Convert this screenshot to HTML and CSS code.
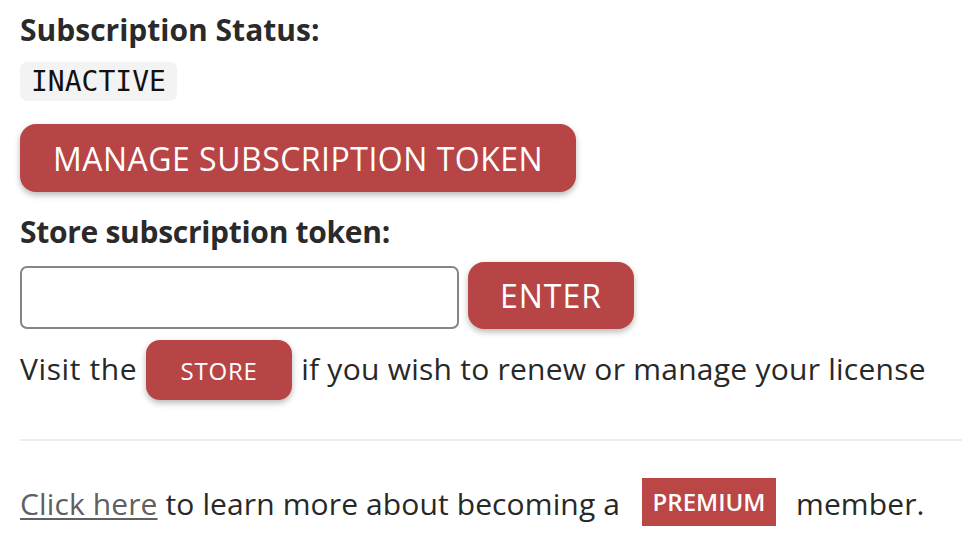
FILE: index.html
```html
<!DOCTYPE html>
<html>
<head>
<meta charset="utf-8">
<link rel="stylesheet" href="styles.css">
</head>
<body>
<div class="panel">
  <div class="label">Subscription Status:</div>
  <div class="status-row"><code class="status">INACTIVE</code></div>
  <div class="manage-row"><button class="btn btn-big">MANAGE SUBSCRIPTION TOKEN</button></div>
  <div class="label label-store">Store subscription token:</div>
  <div class="token-row">
    <input class="token-input" type="text">
    <button class="btn btn-enter">ENTER</button>
  </div>
  <div class="visit-row">
    <span class="visit-lead">Visit the</span>
    <button class="btn btn-store">STORE</button>
    <span>if you wish to renew or manage your license</span>
  </div>
  <hr class="divider">
  <div class="premium-row">
    <a class="link" href="#">Click here</a>
    <span class="gap-text">to learn more about becoming a</span>
    <span class="badge">PREMIUM</span>
    <span>member.</span>
  </div>
</div>
</body>
</html>
```

FILE: styles.css
```css
html, body {
  margin: 0;
  padding: 0;
  background: #ffffff;
}
body {
  font-family: "Open Sans", "Noto Sans", sans-serif;
  color: #282828;
  font-size: 30px;
  letter-spacing: 0.25px;
}
.panel {
  padding: 12px 0 0 20px;
  display: flex;
  flex-direction: column;
  align-items: flex-start;
}
.label {
  font-weight: 700;
  font-size: 30px;
  line-height: 36px;
  letter-spacing: 0;
  color: #2a2a2a;
}
.label-store {
  margin-top: 22px;
  letter-spacing: -0.3px;
}
.status-row {
  margin-top: 14px;
  display: flex;
}
.status {
  font-family: "DejaVu Sans Mono", monospace;
  font-size: 28px;
  line-height: 39px;
  letter-spacing: 0;
  padding: 0 11px;
  background: #f3f3f3;
  border-radius: 7px;
  color: #111;
}
.btn {
  font-family: "Open Sans", "Noto Sans", sans-serif;
  background: #b84545;
  color: #ffffff;
  border: none;
  box-shadow: 0 3px 6px rgba(0, 0, 0, 0.28);
  cursor: pointer;
  padding: 0;
}
.manage-row {
  margin-top: 23px;
  display: flex;
}
.btn-big {
  width: 556px;
  height: 68px;
  font-size: 32px;
  letter-spacing: 0.5px;
  border-radius: 16px;
}
.token-row {
  margin-top: 12px;
  display: flex;
  align-items: flex-end;
  gap: 9px;
}
.token-input {
  box-sizing: border-box;
  width: 439px;
  height: 63px;
  border: 2px solid #858585;
  border-radius: 7px;
  margin: 0;
  font-size: 28px;
  background: #fff;
}
.btn-enter {
  width: 166px;
  height: 67px;
  font-size: 32px;
  letter-spacing: 1px;
  border-radius: 16px;
}
.visit-row {
  margin-top: 11px;
  display: flex;
  align-items: baseline;
  gap: 9px;
  line-height: 36px;
}
.visit-lead {
  letter-spacing: 0.6px;
}
.btn-store {
  width: 146px;
  height: 60px;
  font-size: 24px;
  letter-spacing: 0.8px;
  border-radius: 14px;
}
.divider {
  align-self: stretch;
  margin: 39px 0 0 0;
  border: none;
  border-top: 2px solid #ececec;
  height: 0;
}
.premium-row {
  margin-top: 37px;
  display: flex;
  align-items: flex-start;
  line-height: 51px;
  letter-spacing: 0.12px;
}
.link {
  color: #606060;
  text-decoration: underline;
  text-decoration-thickness: 2px;
  text-underline-offset: 3px;
}
.gap-text {
  margin-left: 8px;
}
.badge {
  margin: 0 20px 0 22px;
  background: #bb4646;
  color: #fff;
  font-size: 24px;
  font-weight: 600;
  letter-spacing: 0;
  width: 134px;
  text-align: center;
  height: 48px;
  line-height: 48px;
}
```
